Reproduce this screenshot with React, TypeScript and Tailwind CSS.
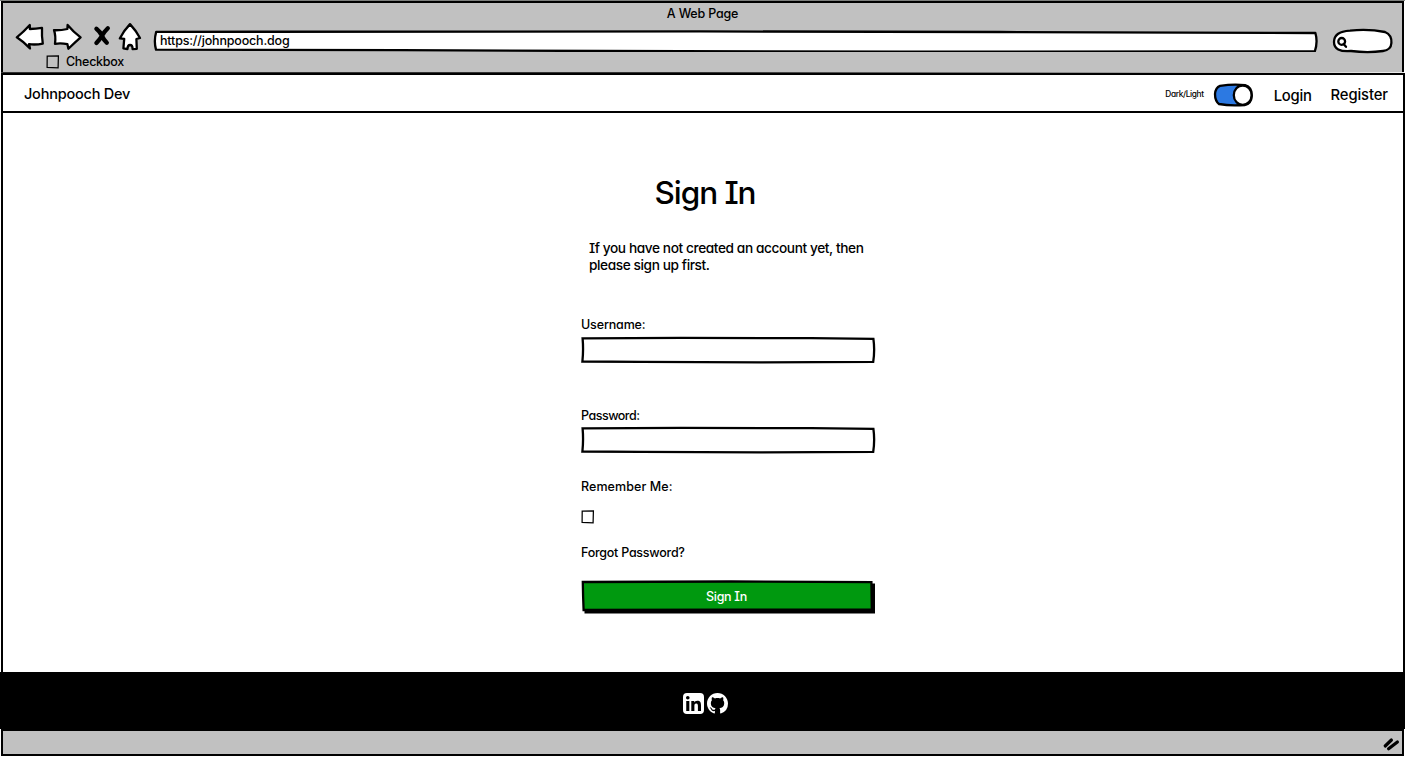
import React from "react";

const ink = {
  fill: "none",
  stroke: "#000",
  strokeWidth: 2.3,
  strokeLinecap: "round" as const,
  strokeLinejoin: "round" as const,
};

function BackIcon() {
  return (
    <svg className="h-[30px] w-[32px] shrink-0" viewBox="14 22 32 30">
      <path {...ink} fill="#fff" d="M16.8 37.3 Q23.5 32 29.8 25 L29.8 29 Q36 29 42 27.9 Q41.6 36 42.8 43.6 Q36 45 29 44.2 L30 48.4 Q23.4 41.6 16.8 37.3Z" />
    </svg>
  );
}

function ForwardIcon() {
  return (
    <svg className="h-[30px] w-[32px] shrink-0" viewBox="52 22 32 30">
      <path {...ink} fill="#fff" d="M54 30.2 Q61 30.4 67.4 29 L67.6 25 Q73 31.6 80.6 37.3 Q74.6 42.6 68.4 48.8 L67.4 44.2 Q61 42.8 55 43.8 Q56 36 54 30.2Z" />
    </svg>
  );
}

function StopIcon() {
  return (
    <svg className="h-[30px] w-[22px] shrink-0" viewBox="91 22 22 30">
      <path
        d="M96.4 28.8 Q100 31.6 102 35.8 Q103.6 39.6 106.8 42.8 M107.8 28.2 Q104.4 31.4 102 35.8 Q99.6 39.6 96.4 43"
        fill="none"
        stroke="#000"
        strokeWidth="4.3"
        strokeLinecap="round"
      />
    </svg>
  );
}

function HomeIcon() {
  return (
    <svg className="h-[30px] w-[26px] shrink-0" viewBox="117 22 26 30">
      <path {...ink} fill="#fff" d="M130 24.1 Q136 30.5 140 38 L136.4 39 L136.8 48.8 L132.6 49.2 Q132.6 45 130 45 Q127.6 45 127.4 49.2 L123.4 48.4 L124.2 38.8 L119.8 38.4 Q123.8 30.6 130 24.1Z" />
    </svg>
  );
}

function SketchCheckbox() {
  return (
    <svg className="h-[14px] w-[14px] shrink-0" viewBox="0 0 14 14">
      <path d="M1.2 1.2 L12.4 .9 L12.1 12.8 L1.1 12.4Z" fill="none" stroke="#000" strokeWidth="1.25" />
    </svg>
  );
}

function Field({ label, tracking, gap }: { label: string; tracking: string; gap: string }) {
  return (
    <div>
      <label className={`block h-[18px] text-[12.5px] leading-[18px] ${tracking}`}>{label}</label>
      <svg className={`block h-[28px] w-[295px] ${gap}`} viewBox="0 0 295 28">
        <path
          {...ink}
          strokeLinecap="butt"
          strokeLinejoin="miter"
          fill="#fff"
          d="M1.6 2.4 L100 1.8 L230 2.2 L292.4 2.8 Q294 14 292.2 25.8 L180 26.3 L60 25.8 L1.4 25.5 Q2.6 14 1.6 2.4Z"
        />
      </svg>
    </div>
  );
}

function Browser() {
  return (
    <header className="flex h-[73px] flex-col">
      <div className="h-px bg-[#7d7f7d]" />
      <div className="mx-px flex h-[71px] flex-col border-x-2 border-t-2 border-black bg-[#c1c1c1]">
        <div className="h-[19px] text-center text-[12.5px] leading-[22px] tracking-[-0.2px]">A Web Page</div>
        <div className="flex h-[30px] pl-[11px]">
          <BackIcon />
          <span className="w-[6px]" />
          <ForwardIcon />
          <span className="w-[7px]" />
          <StopIcon />
          <span className="w-[4px]" />
          <HomeIcon />
          <div className="relative ml-[9px] h-[30px] w-[1168px] shrink-0">
            <svg className="absolute inset-0 h-[30px] w-[1168px]" viewBox="152 22 1168 30">
              <path {...ink} fill="#fff" d="M156.2 31.8 L700 31.4 L1000 32 L1315.4 33 Q1318 42 1314.8 51.5 L900 51.6 L600 51 L400 50.2 L156 49.6 Q153.6 41 156.2 31.8Z" />
            </svg>
            <span className="relative block pl-[8px] text-[12.5px] leading-[38px] tracking-[-0.18px]">https://johnpooch.dog</span>
          </div>
          <svg className="ml-[10px] h-[33px] w-[64px] shrink-0" viewBox="1330 22 64 33">
            <path {...ink} fill="#fff" d="M1334 42 Q1334 31.5 1350 30.6 Q1369 28.8 1385 32 Q1392 35 1391.4 43 Q1391 50 1383 51 Q1368 53.2 1351 51 Q1334 52.4 1334 42Z" />
            <circle cx="1341.7" cy="41.4" r="3.4" {...ink} />
            <path {...ink} d="M1343.6 44 L1346 46.8" />
          </svg>
        </div>
        <div className="flex h-[20px] items-center pl-[43px]">
          <SketchCheckbox />
          <span className="ml-[6px] text-[12.5px] tracking-[-0.3px]">Checkbox</span>
        </div>
      </div>
      <div className="mx-px h-px bg-linear-to-r from-[#333] via-[#333] to-[#eee]" />
    </header>
  );
}

function Navbar() {
  return (
    <nav className="ml-px flex h-[40px] items-center border-2 border-black bg-white pl-[21px]">
      <span className="mt-px text-[14.5px] tracking-[-0.22px]">Johnpooch Dev</span>
      <span className="ml-auto mt-[3px] text-[8.3px] tracking-[-0.35px]">Dark/Light</span>
      <svg className="ml-[8px] mt-[3px] h-[26px] w-[42px]" viewBox="1212 82 42 26">
        <path {...ink} fill="#2c79e2" d="M1220 85.8 Q1234 83.8 1245 85.2 Q1252 87.2 1251.8 95.6 Q1251.4 103.4 1245 105 Q1230 106.2 1219 104 Q1215 101 1215 94 Q1215.6 87.4 1220 85.8Z" />
        <ellipse {...ink} fill="#fff" cx="1242.7" cy="95.2" rx="8.9" ry="9.7" />
      </svg>
      <span className="ml-[20px] mt-[6px] text-[14.8px] tracking-[-0.25px]">Login</span>
      <span className="ml-[19px] mr-[15px] mt-[4px] text-[14.8px] tracking-[-0.1px]">Register</span>
    </nav>
  );
}

function SignIn() {
  return (
    <main className="ml-px flex h-[559px] flex-col border-l-2 border-r-2 border-black bg-white">
      <h1 className="mt-[58px] h-[44px] pl-[4px] text-center text-[31.5px] leading-[44px] tracking-[-1.05px]">Sign In</h1>
      <p className="ml-[586px] mt-[25px] text-[13.7px] leading-[17px] tracking-[-0.41px]">
        If you have not created an account yet, then
        <br />
        please sign up first.
      </p>
      <form className="ml-[578px] flex flex-col pt-[42px]">
        <Field label="Username:" tracking="tracking-[-0.15px]" gap="mt-[2px]" />
        <div className="h-[43px]" />
        <Field label="Password:" tracking="tracking-[-0.5px]" gap="mt-px" />
        <label className="mt-[24px] h-[18px] text-[12.5px] leading-[18px] tracking-[0.08px]">Remember Me:</label>
        <div className="mt-[14px] h-[14px]">
          <SketchCheckbox />
        </div>
        <a className="mt-[20px] h-[18px] text-[12.5px] leading-[18px] tracking-[-0.25px]">Forgot Password?</a>
        <button type="button" className="relative mt-[18px] h-[34px] w-[295px]">
          <svg className="absolute inset-0 h-[34px] w-[295px]" viewBox="0 0 295 34">
            <path d="M3.5 3.4 H294 V33.4 H3.5Z" />
            <path {...ink} strokeLinejoin="miter" fill="#00990f" d="M1.8 2 L150 1.5 L290.4 2.2 L290.8 29.3 L150 29.6 L2.6 30 Q2 16 1.8 2Z" />
          </svg>
          <span className="relative block h-[34px] pr-[4px] text-[12.5px] leading-[33px] tracking-[-0.3px] text-white">Sign In</span>
        </button>
      </form>
    </main>
  );
}

function Footer() {
  return (
    <>
      <footer className="flex h-[57px] items-center justify-center gap-[3px] bg-black pt-[5px] pl-[6px]">
        <svg className="h-[21px] w-[21px]" viewBox="0 0 448 448" fill="#fff">
          <path d="M84 0H364Q448 0 448 84V364Q448 448 364 448H84Q0 448 0 364V84Q0 0 84 0ZM69 170V384H135V170ZM102 64A38 38 0 1 0 102 141A38 38 0 1 0 102 64ZM177 170V384H243V278C243 250 248 223 283 223C317 223 318 255 318 280V384H384V267C384 209 372 165 304 165C271 165 249 183 240 200H239V170Z" fillRule="evenodd" />
        </svg>
        <svg className="h-[21px] w-[21px]" viewBox="0 0 16 16" fill="#fff">
          <path d="M8 0C3.58 0 0 3.58 0 8c0 3.54 2.29 6.53 5.47 7.59.4.07.55-.17.55-.38 0-.19-.01-.82-.01-1.49-2.01.37-2.53-.49-2.69-.94-.09-.23-.48-.94-.82-1.13-.28-.15-.68-.52-.01-.53.63-.01 1.08.58 1.23.82.72 1.21 1.87.87 2.33.66.07-.52.28-.87.51-1.07-1.78-.2-3.64-.89-3.64-3.95 0-.87.31-1.59.82-2.15-.08-.2-.36-1.02.08-2.12 0 0 .67-.21 2.2.82.64-.18 1.32-.27 2-.27s1.36.09 2 .27c1.53-1.04 2.2-.82 2.2-.82.44 1.1.16 1.92.08 2.12.51.56.82 1.27.82 2.15 0 3.07-1.87 3.75-3.65 3.95.29.25.54.73.54 1.48 0 1.07-.01 1.93-.01 2.2 0 .21.15.46.55.38A8.01 8.01 0 0 0 16 8c0-4.42-3.58-8-8-8Z" />
        </svg>
      </footer>
      <div className="ml-px mr-px flex h-[27px] items-center justify-end border-2 border-black bg-[#c1c1c1]">
        <svg className="mr-[2px] mt-[2px] h-[18px] w-[20px]" viewBox="1380 735 20 18">
          <path d="M1385.2 746 L1391.4 740 M1388.6 748.8 L1397.4 742" stroke="#000" strokeWidth="3.2" strokeLinecap="round" />
        </svg>
      </div>
    </>
  );
}

export default function App() {
  return (
    <div className="h-[757px] w-[1405px] overflow-hidden bg-white font-['Inter',sans-serif] font-medium text-black [font-feature-settings:'cv08','cv11']">
      <Browser />
      <Navbar />
      <SignIn />
      <Footer />
    </div>
  );
}
